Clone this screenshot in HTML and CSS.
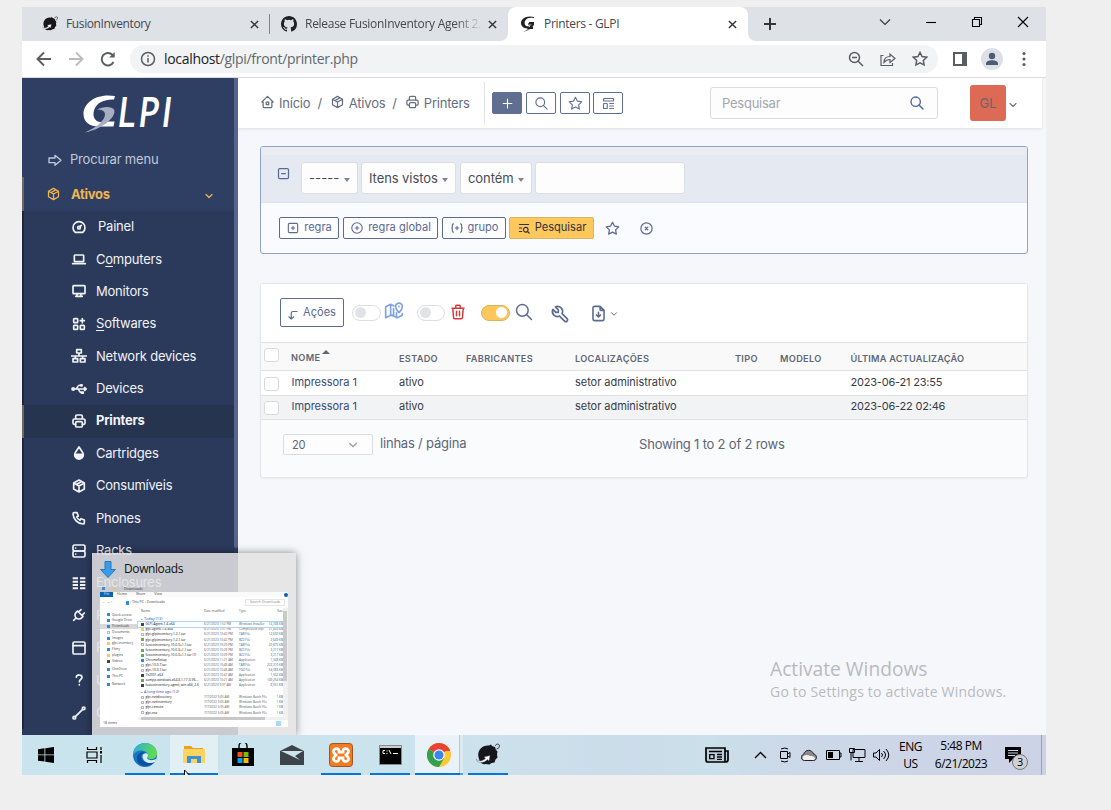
FILE: index.html
```html
<!DOCTYPE html>
<html lang="pt">
<head>
<meta charset="utf-8">
<title>Printers - GLPI</title>
<link rel="stylesheet" href="styles.css">
</head>
<body>
<svg class="sprite" aria-hidden="true">
  <symbol id="close" viewBox="0 0 10 10"><path d="M1 1l8 8M9 1l-8 8"/></symbol>
  <symbol id="home" viewBox="0 0 24 24"><path d="M5 12H3l9-9 9 9h-2M5 12v7a2 2 0 0 0 2 2h10a2 2 0 0 0 2-2v-7M10 12h4v4h-4z"/></symbol>
  <symbol id="package" viewBox="0 0 24 24"><path d="M12 3l8 4.500v9L12 21l-8-4.500v-9zM12 12l8-4.500M12 12v9M12 12L4 7.500M16 5.250l-8 4.500"/></symbol>
  <symbol id="printer" viewBox="0 0 24 24"><path d="M17 17h2a2 2 0 0 0 2-2v-4a2 2 0 0 0-2-2H5a2 2 0 0 0-2 2v4a2 2 0 0 0 2 2h2M17 9V5a2 2 0 0 0-2-2H9a2 2 0 0 0-2 2v4"/><rect x="7" y="13" width="10" height="8" rx="2"/></symbol>
  <symbol id="search" viewBox="0 0 24 24"><circle cx="10" cy="10" r="7"/><path d="M21 21l-6-6"/></symbol>
  <symbol id="plus" viewBox="0 0 24 24"><path d="M12 5v14M5 12h14"/></symbol>
  <symbol id="star" viewBox="0 0 24 24"><path d="M12 17.750l-6.172 3.245 1.179-6.873-5-4.867 6.900-1L12 2l3.086 6.253 6.900 1-5 4.867 1.179 6.873z"/></symbol>
  <symbol id="template" viewBox="0 0 24 24"><rect x="4" y="4" width="16" height="4" rx="1"/><rect x="4" y="12" width="6" height="8" rx="1"/><path d="M14 12h6M14 16h6M14 20h6"/></symbol>
  <symbol id="chevron" viewBox="0 0 24 24"><path d="M6 9l6 6 6-6"/></symbol>
  <symbol id="arrow-big" viewBox="0 0 24 24"><path d="M3 9h9V5l9 7.500-9 7.500v-4H3z"/></symbol>
  <symbol id="dashboard" viewBox="0 0 24 24"><circle cx="12" cy="13" r="2"/><path d="M13.450 11.550L15.500 9.500M6.400 20a9 9 0 1 1 11.200 0z"/></symbol>
  <symbol id="laptop" viewBox="0 0 24 24"><path d="M2.500 19h19"/><rect x="5" y="6" width="14" height="10" rx="1"/></symbol>
  <symbol id="screen" viewBox="0 0 24 24"><rect x="3" y="4" width="18" height="12" rx="1"/><path d="M7 20h10M9 16v4M15 16v4"/></symbol>
  <symbol id="apps" viewBox="0 0 24 24"><rect x="4" y="4" width="6" height="6" rx="1"/><rect x="4" y="14" width="6" height="6" rx="1"/><rect x="14" y="14" width="6" height="6" rx="1"/><path d="M14 7h6M17 4v6"/></symbol>
  <symbol id="network" viewBox="0 0 24 24"><path d="M8.500 2.500h7v5h-7zM3 16h7v5H3zM14 16h7v5h-7zM0 12h24M12 8v4M6.500 12v4M17.500 12v4"/></symbol>
  <symbol id="usb" viewBox="0 0 26 24"><circle cx="3.500" cy="12" r="2"/><path d="M3 12h19M7 12c4 0 3-6 7-6h2M10 12c4 0 3 6 7 6h1M16 5h2v2h-2zM17 17h3v2h-3zM22 9.500v5l3-2.500z"/></symbol>
  <symbol id="droplet" viewBox="0 0 24 24"><path d="M12 3l-5 7.500a6.500 6.500 0 1 0 10 0z"/><path d="M6 14h12a6 6 0 0 1-12 0z" fill="currentColor"/></symbol>
  <symbol id="phone" viewBox="0 0 24 24"><path d="M5 4h4l2 5-2.500 1.500a11 11 0 0 0 5 5L15 13l5 2v4a2 2 0 0 1-2 2A16 16 0 0 1 3 6a2 2 0 0 1 2-2"/></symbol>
  <symbol id="server" viewBox="0 0 24 24"><rect x="3" y="3" width="18" height="9" rx="2.500"/><rect x="3" y="12" width="18" height="9" rx="2.500"/><path d="M7 7.500v.01M7 16.500v.01"/></symbol>
  <symbol id="enclosure" viewBox="0 0 24 24"><path d="M2.500 5h8M2.500 10h8M2.500 15h8M2.500 20h8M13.500 5h8M13.500 10h8M13.500 15h8M13.500 20h8" stroke-width="3" stroke-linecap="butt"/></symbol>
  <symbol id="plug" viewBox="0 0 24 24"><path d="M9.785 6L18 14.215l-2.054 2.054a5.810 5.810 0 1 1-8.215-8.215zM4 20l3.500-3.500M15 4l-3.500 3.500M20 9l-3.500 3.500"/></symbol>
  <symbol id="panel" viewBox="0 0 24 24"><rect x="3" y="3" width="18" height="18" rx="2"/><path d="M3 8.500h18"/></symbol>
  <symbol id="question" viewBox="0 0 24 24"><path d="M8 8c0-5 8.500-4.500 8.500 0 0 3-4 3.500-4 6.500M12.500 19v.5"/></symbol>
  <symbol id="line" viewBox="0 0 24 24"><circle cx="5" cy="19" r="2"/><circle cx="19" cy="5" r="2"/><path d="M6.500 17.500l11-11"/></symbol>
  <symbol id="square-minus" viewBox="0 0 24 24"><rect x="4" y="4" width="16" height="16" rx="2"/><path d="M9 12h6"/></symbol>
  <symbol id="square-plus" viewBox="0 0 24 24"><rect x="4" y="4" width="16" height="16" rx="2"/><path d="M9 12h6M12 9v6"/></symbol>
  <symbol id="circle-plus" viewBox="0 0 24 24"><circle cx="12" cy="12" r="9"/><path d="M9 12h6M12 9v6"/></symbol>
  <symbol id="circle-x" viewBox="0 0 24 24"><circle cx="12" cy="12" r="9"/><path d="M10 10l4 4M14 10l-4 4"/></symbol>
  <symbol id="code-plus" viewBox="0 0 24 24"><path d="M9 12h6M12 9v6M6 19a2 2 0 0 1-2-2v-4l-1-1 1-1V7a2 2 0 0 1 2-2M18 19a2 2 0 0 0 2-2v-4l1-1-1-1V7a2 2 0 0 0-2-2"/></symbol>
  <symbol id="list-search" viewBox="0 0 24 24"><circle cx="15" cy="15" r="4"/><path d="M18.500 18.500L21 21M4 6h16M4 12h4M4 18h4"/></symbol>
  <symbol id="corner" viewBox="0 0 24 24"><path d="M19 6h-7a3 3 0 0 0-3 3v10l-4-4M9 19l4-4"/></symbol>
  <symbol id="map" viewBox="0 0 24 24"><path d="M10 17.500L8 17l-6 3V7l6-3 4 2M8 4v13M22 15v2l-6 3-6-3M15 14v6M18 14s-4-4-4-7.500a4 4 0 0 1 8 0C22 10 18 14 18 14zM18 6.500v.5M11.500 9v8"/></symbol>
  <symbol id="trash" viewBox="0 0 24 24"><path d="M4 7h16M10 11v6M14 11v6M5 7l1 12a2 2 0 0 0 2 2h8a2 2 0 0 0 2-2l1-12M9 7V4a1 1 0 0 1 1-1h4a1 1 0 0 1 1 1v3"/></symbol>
  <symbol id="tool" viewBox="0 0 24 24"><path d="M7 10h3V7L6.500 3.500a6 6 0 0 1 8 8l6 6a2 2 0 0 1-3 3l-6-6a6 6 0 0 1-8-8z"/></symbol>
  <symbol id="file-down" viewBox="0 0 24 24"><path d="M14 3v4a1 1 0 0 0 1 1h4M17 21H7a2 2 0 0 1-2-2V5a2 2 0 0 1 2-2h7l5 5v11a2 2 0 0 1-2 2zM12 10.500v6M9.500 14l2.500 2.500 2.500-2.500"/></symbol>
  <symbol id="hedgehog" viewBox="0 0 24 24"><path d="M3 16C0 8 6 1.500 13 2.500l2-1 1 1.500 3 1 1 3 1.500 1.500-.5 3 .5 3-2 2-1 3-3 .500-2 1.500-4-.5C7 22 4 20 3 16z" fill="#16161b"/><path d="M19.500 3c0-2.500 4-2.500 4 0s-3 3-3 3" fill="none" stroke="#333" stroke-width="1"/><path d="M0 16c2 3 6.500 2.500 9.500-.5L8 14l6-1.500-1 5.500-1.500-1.500C8 20.500 1 20.500 0 16z" fill="#fff" stroke="#555" stroke-width=".4"/></symbol>
</svg>

<main class="desktop">
  <div class="tabs">
    <div class="tabs-left">
      <div class="tab tab-one">
        <svg class="fav"><use href="#hedgehog"/></svg><span class="tab-title">FusionInventory</span><svg class="x"><use href="#close"/></svg>
      </div>
      <div class="tab tab-two">
        <svg class="fav" viewBox="0 0 16 16"><path fill="#1f2328" d="M8 0C3.580 0 0 3.580 0 8c0 3.540 2.290 6.530 5.470 7.590.4.070.55-.17.55-.38v-1.490c-2.010.37-2.530-.49-2.690-.94-.09-.23-.48-.94-.82-1.130-.28-.15-.68-.52-.01-.53.63-.01 1.080.58 1.230.82.72 1.210 1.870.87 2.330.66.070-.52.28-.87.51-1.070-1.780-.2-3.640-.89-3.640-3.950 0-.87.31-1.590.82-2.150-.08-.2-.36-1.020.08-2.120 0 0 .67-.21 2.200.82a7.600 7.600 0 0 1 4 0c1.530-1.040 2.200-.82 2.200-.82.44 1.100.16 1.920.08 2.120.51.56.82 1.270.82 2.150 0 3.070-1.870 3.750-3.650 3.950.29.25.54.73.54 1.480v2.200c0 .21.15.46.55.38A8 8 0 0 0 16 8c0-4.420-3.580-8-8-8z"/></svg>
        <span class="tab-title fade">Release FusionInventory Agent 2.</span><svg class="x"><use href="#close"/></svg>
      </div>
    </div>
    <div class="tab-active-wrap">
      <div class="tab tab-active">
        <svg class="fav" viewBox="0 0 16 16"><path d="M14 1C6-1 1 3 1 7s4 6 7 5l1-2C5 11 4 8 5 5c1-3 5-4 9-3z" fill="#222"/><path d="M8 7h5v3c-2 3-5 5-10 6 4-2 6-4 7-6l-2-1z" fill="#777"/><path d="M9 6h5v3l-3 3h-2l3-4H9zM8 11h5v2H7z" fill="#222"/></svg>
        <span class="tab-title">Printers - GLPI</span><svg class="x"><use href="#close"/></svg>
      </div>
    </div>
    <div class="tabs-right">
      <svg class="newtab" viewBox="0 0 12 12"><path d="M6 0v12M0 6h12"/></svg>
      <div class="win-controls">
        <svg viewBox="0 0 12 12"><path d="M1 3.500l5 5 5-5"/></svg>
        <svg viewBox="0 0 12 12"><path d="M1 6.500h10"/></svg>
        <svg viewBox="0 0 12 12"><path d="M1.500 3.500h7v7h-7zM3.500 3V1.500h7v7H9"/></svg>
        <svg viewBox="0 0 12 12"><path d="M1 1l10 10M11 1L1 11"/></svg>
      </div>
    </div>
  </div>

  <div class="toolbar">
    <svg class="nav" viewBox="0 0 16 16"><path d="M15 8H2M8 1.500L1.500 8 8 14.500"/></svg>
    <svg class="nav dim" viewBox="0 0 16 16"><path d="M1 8h13M8 1.500L14.500 8 8 14.500"/></svg>
    <svg class="nav" viewBox="0 0 16 16"><path d="M13.500 11A6.200 6.200 0 1 1 12.500 4l1.500 1.500"/><path d="M14.700 1v5.500H9.200z" fill="#5a5e63" stroke="none"/></svg>
    <div class="omnibox">
      <svg class="info" viewBox="0 0 16 16"><circle cx="8" cy="8" r="6.500"/><path d="M8 7v4.500M8 4.300v1.500"/></svg>
      <span class="url"><b>localhost</b>/glpi/front/printer.php</span>
      <svg class="oi" viewBox="0 0 16 16"><circle cx="6.500" cy="6.500" r="5"/><path d="M10.200 10.200L15 15M4 6.500h5"/></svg>
      <svg class="oi" viewBox="0 0 16 16"><path d="M3.500 4.500H1v10h11.500V12M4 11.500c0-4 2.500-6 6-6V3l5 4.500-5 4v-3c-3 0-4.500 1-6 3z" stroke-width="1.200"/></svg>
      <svg class="oi" viewBox="0 0 24 24"><use href="#star"/></svg>
    </div>
    <svg class="side" viewBox="0 0 14 14"><path d="M0 0h14v14H0z" fill="#5a5e63"/><path d="M2 2h7v10H2z" fill="#fff"/></svg>
    <svg class="person" viewBox="0 0 22 22"><circle cx="11" cy="11" r="11" fill="#dde0e6"/><circle cx="11" cy="8" r="3.200" fill="#4d5b75"/><path d="M5 17v-1.500c0-4.500 12-4.500 12 0V17z" fill="#4d5b75"/></svg>
    <svg class="dots" viewBox="0 0 4 16"><circle cx="2" cy="2.500" r="1.600"/><circle cx="2" cy="8" r="1.600"/><circle cx="2" cy="13.500" r="1.600"/></svg>
  </div>

  <div class="page">
    <aside class="sidebar">
      <svg class="logo" viewBox="0 0 92 40"><path d="M33 2C14-1 1.500 9 1.500 20c0 8 6 12.500 15.500 12.500h14.500l1-5H22l-4 .5c-6-1-8-7-5.500-13C15 8.500 23 5 32 5.500z" fill="#fff"/><path d="M15 15.500c6-3.500 15-3.500 17 0 3 6-9 19-29 23 11-5 20-12 20-18 0-4-4-5-8-5z" fill="#a6aec2"/><text transform="translate(34 32.500) skewX(-7) scale(.82 1)" class="logo-text">LPI</text></svg>
      <div class="find"><svg class="ico"><use href="#arrow-big"/></svg><span>Procurar menu</span></div>
      <div class="group"><svg class="ico"><use href="#package"/></svg><span>Ativos</span><svg class="ico caret"><use href="#chevron"/></svg></div>
      <nav class="menu">
        <a class="first"><svg class="ico"><use href="#dashboard"/></svg>Painel</a>
        <a><svg class="ico"><use href="#laptop"/></svg><span>C<u>o</u>mputers</span></a>
        <a><svg class="ico"><use href="#screen"/></svg>Monitors</a>
        <a><svg class="ico"><use href="#apps"/></svg><span><u>S</u>oftwares</span></a>
        <a><svg class="ico"><use href="#network"/></svg>Network devices</a>
        <a><svg class="ico"><use href="#usb"/></svg>Devices</a>
        <a class="current"><svg class="ico"><use href="#printer"/></svg>Printers</a>
        <a><svg class="ico"><use href="#droplet"/></svg>Cartridges</a>
        <a><svg class="ico"><use href="#package"/></svg>Consumíveis</a>
        <a><svg class="ico"><use href="#phone"/></svg>Phones</a>
        <a><svg class="ico"><use href="#server"/></svg>Racks</a>
        <a><svg class="ico"><use href="#enclosure"/></svg>Enclosures</a>
        <a><svg class="ico"><use href="#plug"/></svg>P</a>
        <a><svg class="ico"><use href="#panel"/></svg>P</a>
        <a><svg class="ico"><use href="#question"/></svg>U</a>
        <a><svg class="ico"><use href="#line"/></svg>C</a>
      </nav>
      <div class="side-scroll"></div>
    </aside>

    <section class="content">
      <header class="top">
        <div class="crumbs">
          <svg class="ico"><use href="#home"/></svg><span class="c1">Início</span><span class="sl">/</span>
          <svg class="ico"><use href="#package"/></svg><span class="c2">Ativos</span><span class="sl">/</span>
          <svg class="ico"><use href="#printer"/></svg><span class="c3">Printers</span>
        </div>
        <div class="quick">
          <a class="qb solid"><svg class="ico"><use href="#plus"/></svg></a>
          <a class="qb"><svg class="ico"><use href="#search"/></svg></a>
          <a class="qb"><svg class="ico"><use href="#star"/></svg></a>
          <a class="qb last"><svg class="ico"><use href="#template"/></svg></a>
        </div>
        <div class="global"><span>Pesquisar</span><svg class="ico"><use href="#search"/></svg></div>
        <div class="user">GL</div>
        <svg class="ico user-caret"><use href="#chevron"/></svg>
      </header>

      <div class="criteria card">
        <div class="rule">
          <svg class="ico"><use href="#square-minus"/></svg>
          <div class="sel s1"><span>-----</span><i></i></div>
          <div class="sel s2"><span>Itens vistos</span><i></i></div>
          <div class="sel s3"><span>contém</span><i></i></div>
          <div class="sel s4"></div>
        </div>
        <div class="actions">
          <a class="btn b1"><svg class="ico"><use href="#square-plus"/></svg>regra</a>
          <a class="btn b2"><svg class="ico"><use href="#circle-plus"/></svg>regra global</a>
          <a class="btn b3"><svg class="ico"><use href="#code-plus"/></svg>grupo</a>
          <a class="btn b4"><svg class="ico"><use href="#list-search"/></svg>Pesquisar</a>
          <svg class="ico a1"><use href="#star"/></svg>
          <svg class="ico a2"><use href="#circle-x"/></svg>
        </div>
      </div>

      <div class="results card">
        <div class="bar">
          <a class="acoes"><svg class="ico"><use href="#corner"/></svg>Ações</a>
          <span class="toggle"></span><svg class="ico map"><use href="#map"/></svg>
          <span class="toggle t2"></span><svg class="ico trash"><use href="#trash"/></svg>
          <span class="toggle on"></span><svg class="ico mag"><use href="#search"/></svg>
          <svg class="ico wrench"><use href="#tool"/></svg>
          <svg class="ico file"><use href="#file-down"/></svg>
          <svg class="ico tiny"><use href="#chevron"/></svg>
        </div>
        <div class="tr th"><i class="cb"></i><span class="sorted">Nome</span><span>Estado</span><span>Fabricantes</span><span>Localizações</span><span>Tipo</span><span>Modelo</span><span>Última actualização</span></div>
        <div class="tr"><i class="cb"></i><span class="link">Impressora 1</span><span>ativo</span><span></span><span>setor administrativo</span><span></span><span></span><span>2023-06-21 23:55</span></div>
        <div class="tr even"><i class="cb"></i><span class="link">Impressora 1</span><span>ativo</span><span></span><span>setor administrativo</span><span></span><span></span><span>2023-06-22 02:46</span></div>
        <div class="foot">
          <div class="count"><span>20</span><svg class="ico"><use href="#chevron"/></svg></div>
          <span class="per">linhas / página</span>
          <span class="showing">Showing 1 to 2 of 2 rows</span>
        </div>
      </div>
    </section>

    <div class="watermark"><p class="w1">Activate Windows</p><p class="w2">Go to Settings to activate Windows.</p></div>

    <div class="preview">
      <div class="preview-title"><svg viewBox="0 0 16 17"><path d="M5 .5h6v8h4.500L8 16.500.5 8.500H5z" fill="#3c9be6" stroke="#2879bd"/></svg><span>Downloads</span></div>
      <div class="mini-title"><i class="down"></i><i class="fold"></i><span>Downloads</span></div>
      <div class="mini">
        <div class="ribbon"><b>File</b><span>Home</span><span>Share</span><span>View</span><i></i></div>
        <div class="addr"><span class="arr">← → ↑</span><i></i><span class="path">› This PC › Downloads</span><span class="srch">Search Downloads</span></div>
        <div class="mini-body">
          <div class="tree">
            <span><i class="bl"></i>Quick access</span><span><i class="bl"></i>Google Drive</span><span class="on"><i class="bl"></i>Downloads</span><span><i></i>Documents</span><span><i class="bl"></i>Images</span><span><i class="ye"></i>glpi-inventory</span><span><i class="bl"></i>Filmy</span><span><i class="ye"></i>plugins</span><span><i class="bk"></i>Videos</span><span class="gap"><i class="bl"></i>OneDrive</span><span class="gap"><i class="bl"></i>This PC</span><span class="gap"><i class="bl"></i>Network</span>
          </div>
          <div class="files">
            <div class="f h"><span>Name</span><span>Date modified</span><span>Type</span><span>Size</span></div>
            <div class="g">⌄ Today (13)</div>
            <div class="f sel-row"><span><i class="bk"></i>GLPI-Agent-1.4-x64</span><span>6/21/2023 1:52 PM</span><span>Windows Installer</span><span>14,748 KB</span></div>
            <div class="f"><span><i class="ye"></i>glpi-agent-1.4-x64</span><span>6/21/2023 1:51 PM</span><span>Compressed (zip)</span><span>21,833 KB</span></div>
            <div class="f"><span><i></i>glpi-glpiinventory-1.2.1.tar</span><span>6/21/2023 10:42 PM</span><span>TAR File</span><span>12,630 KB</span></div>
            <div class="f"><span><i class="gr"></i>glpi-glpiinventory-1.2.1.tar</span><span>6/21/2023 10:42 PM</span><span>BZ2 File</span><span>2,649 KB</span></div>
            <div class="f"><span><i></i>fusioninventory-10.0.3+1.1.tar</span><span>6/21/2023 10:29 PM</span><span>TAR File</span><span>20,870 KB</span></div>
            <div class="f"><span><i class="gr"></i>fusioninventory-10.0.3+1.1.tar</span><span>6/21/2023 10:29 PM</span><span>BZ2 File</span><span>3,217 KB</span></div>
            <div class="f"><span><i class="gr"></i>fusioninventory-10.0.3+1.1.tar (1)</span><span>6/21/2023 10:29 PM</span><span>BZ2 File</span><span>3,217 KB</span></div>
            <div class="f"><span><i class="bl"></i>ChromeSetup</span><span>6/21/2023 11:21 AM</span><span>Application</span><span>1,348 KB</span></div>
            <div class="f"><span><i></i>glpi-10.0.7.tar</span><span>6/21/2023 10:48 AM</span><span>TAR File</span><span>222,210 KB</span></div>
            <div class="f"><span><i></i>glpi-10.0.7.tar</span><span>6/21/2023 10:48 AM</span><span>TGZ File</span><span>54,083 KB</span></div>
            <div class="f"><span><i class="bk"></i>7z2301-x64</span><span>6/21/2023 10:47 AM</span><span>Application</span><span>1,552 KB</span></div>
            <div class="f"><span><i class="gr"></i>xampp-windows-x64-8.1.17-0-VS...</span><span>6/21/2023 10:21 AM</span><span>Application</span><span>149,254 KB</span></div>
            <div class="f"><span><i class="bk"></i>fusioninventory-agent_win-x64_2.6</span><span>6/21/2023 9:37 AM</span><span>Application</span><span>8,551 KB</span></div>
            <div class="g">⌄ A long time ago (12)</div>
            <div class="f"><span><i></i>glpi-netdiscovery</span><span>7/7/2022 5:05 AM</span><span>Windows Batch File</span><span>1 KB</span></div>
            <div class="f"><span><i></i>glpi-netinventory</span><span>7/7/2022 5:05 AM</span><span>Windows Batch File</span><span>1 KB</span></div>
            <div class="f"><span><i></i>glpi-remote</span><span>7/7/2022 5:05 AM</span><span>Windows Batch File</span><span>1 KB</span></div>
            <div class="f"><span><i></i>glpi-esx</span><span>7/7/2022 5:05 AM</span><span>Windows Batch File</span><span>1 KB</span></div>
            <div class="hbar"><i></i></div>
          </div>
          <div class="vbar"><i></i></div>
        </div>
        <div class="mini-status"><span>18 items</span><i></i></div>
      </div>
    </div>
  </div>

  <footer class="taskbar">
    <div class="tk"><svg width="16" height="16" viewBox="0 0 16 16"><path d="M0 2.200l6.500-.9v6.200H0zM7.300 1.200L16 0v7.500H7.300zM0 8.300h6.500v6.300L0 13.700zM7.300 8.300H16V16l-8.700-1.300z"/></svg></div>
    <div class="tk gap3"><svg width="17" height="16" viewBox="0 0 17 16"><path d="M1.500 0v2.500h9V0M1.500 16v-2.500h9V16M1 5h10v6H1zM15 0v3M15 8v8" fill="none" stroke="#000" stroke-width="1.200"/><path d="M14 4h2v2.500h-2z"/></svg></div>
    <div class="tk run"><svg width="24" height="24" viewBox="0 0 24 24"><defs><linearGradient id="eg" x1="0" y1="0" x2="1" y2=".3"><stop offset="0" stop-color="#2aa9e0"/><stop offset="1" stop-color="#5fdc4c"/></linearGradient></defs><circle cx="12" cy="12" r="12" fill="#1674c6"/><path d="M0 12C0 5 5 0 12 0s12 5 12 10c0 5-4 6.500-7 6-3-.5-2.500-2-2-3C16 8 5 4 0 12z" fill="url(#eg)"/><path d="M8 12c-1 6 6 10 14 6.500C16 26 3 24 4 14c1-4 5-6 9-4-3 0-4 1-5 2z" fill="#0c4fa0"/><path d="M9.500 13c0-3 5-4 5.500-1 .2 2-2 3 .5 4.500 3 1.500 6 .5 8-1l-1.500 3.500c-7 3-12.500-1-12.500-6z" fill="#d8edf5"/></svg></div>
    <div class="tk run on"><svg width="22" height="20" viewBox="0 0 22 20"><path d="M1 1h7l2 2h10v15H1z" fill="#e3a51c"/><path d="M0 4h22v14H0z" fill="#fcd462"/><path d="M4 18v-7h14v7h-4v-4H8v4z" fill="#3b93d6"/></svg></div>
    <div class="tk"><svg width="24" height="24" viewBox="0 0 24 24"><path d="M8 6V3a4 4 0 0 1 8 0v3" fill="none" stroke="#111" stroke-width="1.500"/><path d="M1 5h22v18H1z"/><path d="M6.500 9h5v5h-5z" fill="#f25022"/><path d="M12.500 9h5v5h-5z" fill="#7fba00"/><path d="M6.500 15h5v5h-5z" fill="#00a4ef"/><path d="M12.500 15h5v5h-5z" fill="#ffb900"/></svg></div>
    <div class="tk"><svg width="24" height="20" viewBox="0 0 24 20"><path d="M12 0l12 6v14H0V6z" fill="#3c4449"/><path d="M1 6h22l-8 5 5 4L1 6z" fill="#cde3ec"/></svg></div>
    <div class="tk run"><svg width="24" height="24" viewBox="0 0 24 24"><rect x=".5" y=".5" width="23" height="23" rx="3" fill="#f47a1f" stroke="#9c5526"/><path d="M6 6c2-1 4 0 4 2v1h4V8c0-2 2-3 4-2s2 3 0 5l-1 1 1 1c2 2 2 4 0 5s-4 0-4-2v-1h-4v1c0 2-2 3-4 2s-2-3 0-5l1-1-1-1C4 9 4 7 6 6z" fill="none" stroke="#fff" stroke-width="2.800"/></svg></div>
    <div class="tk run"><svg width="23" height="20" viewBox="0 0 23 20"><path d="M.5.5h22v19H.5z" stroke="#888"/><path d="M1 1h21v2H1z" fill="#ccc"/><path d="M6 5.500H4v3h2M8 5.500v1M8 8v1M10 5l2 4M14 8.500h5" stroke="#fff" fill="none"/></svg></div>
    <div class="tk run on chrome"><svg width="24" height="24" viewBox="0 0 24 24"><circle cx="12" cy="12" r="12" fill="#fcc934"/><path d="M12 12L1.600 6A12 12 0 0 1 22.400 6z" fill="#ea4335"/><path d="M1.600 6a12 12 0 0 0 10.400 18l5.200-9z" fill="#34a04c"/><path d="M12 6h10.400l.8 2H12z" fill="#ea4335"/><circle cx="12" cy="12" r="5.800" fill="#fff"/><circle cx="12" cy="12" r="4.600" fill="#3f83ec"/></svg></div>
    <div class="tk run"><svg width="24" height="24" viewBox="0 0 24 24"><use href="#hedgehog"/></svg></div>
    <div class="tray">
      <svg class="news" width="24" height="16" viewBox="0 0 24 16"><path d="M1 1h19v14H3q-2 0-2-2zM20 4h3v9q0 2-3 2" fill="#bcd0dc" stroke="#000" stroke-width="1.700"/><path d="M4 4.500h13M12 7.500h5M12 10h5M12 12.300h5M4.700 7.700H9v4H4.700z" fill="none" stroke="#000" stroke-width="1.300"/></svg>
      <svg class="up" width="13" height="8" viewBox="0 0 13 8"><path d="M1 7l5.500-5.500L12 7" fill="none" stroke="#000" stroke-width="1.300"/></svg>
      <svg class="meet" width="12" height="16" viewBox="0 0 12 16"><path d="M1.500 4.500h7v7h-7zM8.500 7l2.500-1.500v5L8.500 9M2 2q4-2 7 0M2 14q4 2 7 0" fill="none" stroke="#000"/></svg>
      <svg class="cloud" width="16" height="12" viewBox="0 0 16 12"><path d="M3.500 11.500C-.5 11.500-.5 6 2.500 5.500 4 0 11 0 12.500 5c4 .5 4 6.500 0 6.500z" fill="#8a8a8a" stroke="#222"/><path d="M3.500 11C1 11 1 7 3.500 6.500c2-1 4-.5 5.500.5 2 0 4 0 5 2.500-.5 1.500-1 1.500-2 1.500z" fill="#f0f0f0"/></svg>
      <svg class="batt" width="16" height="10" viewBox="0 0 16 10"><path d="M.5.5h13v9H.5zM13.500 3H15v4h-1.500" fill="none" stroke="#000"/><path d="M2 2h5v6H2z"/></svg>
      <svg class="lan" width="17" height="14" viewBox="0 0 17 14"><path d="M4 1.500h12v8H4zM10 9.500V13M6 13.500h8M.5.500h5v4h-5zM2 4v8.500" fill="none" stroke="#000"/></svg>
      <svg class="vol" width="17" height="14" viewBox="0 0 17 14"><path d="M.5 5h2.500L6.500 1.500v11L3 9H.5zM8.500 5q2 2 0 4M10.500 3q4 4 0 8M13 1q5.500 6 0 12" fill="none" stroke="#000"/></svg>
      <div class="lang"><span>ENG</span><span>US</span></div>
      <div class="clock"><span>5:48 PM</span><span>6/21/2023</span></div>
      <div class="note"><svg width="16" height="16" viewBox="0 0 16 16"><path d="M0 0h16v12H8l-4 4v-4H0z"/><path d="M3 3.500h10M3 6h10M3 8.500h7" stroke="#ccd5e5"/></svg><b>3</b></div>
      <div class="peek"></div>
    </div>
  </footer>
  <svg class="cursor" viewBox="0 0 6 5"><path d="M.5 0v5M.5 0l5 5" fill="none" stroke="#000"/><path d="M1 1.500V5h3z" fill="#fff"/></svg>
</main>
</body>
</html>
```
FILE: styles.css
```css
* { box-sizing: border-box; }
body { margin: 0; background: #efefef; overflow: hidden; font-family: Inter, "Liberation Sans", sans-serif; }
.sprite { position: absolute; width: 0; height: 0; }
svg { flex: none; display: block; }
.ico { width: 16px; height: 16px; fill: none; stroke: currentColor; stroke-width: 2; stroke-linecap: round; stroke-linejoin: round; }

.desktop { position: relative; width: 1024px; height: 768px; margin: 7px 0 0 22px; display: flex; flex-direction: column; background: #fff; overflow: hidden; }

/* Browser tabs */
.tabs { height: 34px; display: flex; font-family: "Open Sans", sans-serif; font-size: 12px; color: #45484d; }
.tabs-left { width: 486px; display: flex; background: #dee1e6; border-bottom-right-radius: 8px; }
.tab { display: flex; align-items: center; height: 34px; }
.tab-one { width: 248px; padding: 0 11px 0 20px; position: relative; }
.tab-one::after { content: ""; width: 1px; height: 20px; background: #84878c; margin-left: 10px; margin-right: -11px; }
.tab-two { width: 238px; padding: 0 11px 0 11px; }
.fav { width: 16px; height: 16px; margin-right: 8px; }
.tab-title { flex: 1; white-space: nowrap; letter-spacing: -.38px; overflow: hidden; padding-bottom: 1px; }
.tab-two .tab-title { flex: none; width: 178px; letter-spacing: -.28px; }
.fade { -webkit-mask-image: linear-gradient(90deg, #000 84%, transparent 100%); mask-image: linear-gradient(90deg, #000 84%, transparent 100%); }
.x { width: 9px; height: 9px; stroke: #33363a; stroke-width: 1.6; margin-left: auto; }
.tab-active-wrap { width: 240px; background: linear-gradient(#dee1e6 50%, #fff 50%); }
.tab-active { background: #fff; border-radius: 8px 8px 0 0; padding: 0 11px 0 12px; }
.tab-active .tab-title { letter-spacing: -.3px; }
.tabs-right { flex: 1; display: flex; align-items: center; background: #dee1e6; border-bottom-left-radius: 8px; padding-left: 16px; }
.newtab { width: 12px; height: 12px; stroke: #33363a; stroke-width: 2; }
.win-controls { display: flex; gap: 34px; margin-left: 103px; margin-top: -5px; }
.win-controls svg { width: 12px; height: 12px; fill: none; stroke: #000; stroke-width: 1.1; }
.win-controls svg:first-child { stroke: #333; }

/* Address bar */
.toolbar { height: 37px; display: flex; align-items: center; border-bottom: 1px solid #d8dadd; padding-left: 14px; }
.nav { width: 16px; height: 16px; margin-right: 16px; fill: none; stroke: #5a5e63; stroke-width: 1.9; }
.nav.dim { stroke: #babcbe; }
.omnibox { width: 808px; height: 28px; border-radius: 14px; background: #f1f3f4; margin-left: -2px; display: flex; align-items: center; padding: 0 10px; gap: 16px; }
.info { width: 16px; height: 16px; fill: none; stroke: #5a5e63; stroke-width: 1.5; margin-right: -8px; }
.url { flex: 1; font-family: "Open Sans", sans-serif; font-size: 14px; letter-spacing: -.32px; color: #63676c; padding-bottom: 1px; }
.url b { font-weight: 400; color: #202124; }
.oi { width: 16px; height: 16px; fill: none; stroke: #5a5e63; stroke-width: 1.5; }
.oi:last-child { stroke-width: 2.2; }
.side { width: 14px; height: 14px; margin-left: 15px; }
.person { width: 22px; height: 22px; margin-left: 14px; }
.dots { width: 4px; height: 16px; margin-left: 19px; fill: #5a5e63; }

.page { position: relative; height: 657px; display: flex; background: #f6f7fb; overflow: hidden; }

/* Sidebar */
.sidebar { width: 216px; background: #2f3f64; color: #f1f3f7; font-size: 13px; position: relative; flex: none; }
.logo { width: 92px; height: 40px; margin: 16px 0 0 60px; overflow: visible; }
.logo-text { font: 600 42px "Open Sans", sans-serif; fill: #fff; letter-spacing: 2.5px; }
.find { display: flex; align-items: center; height: 32px; margin-top: 9px; margin-bottom: 2px; padding-left: 25px; color: #c2c8d5; letter-spacing: -.2px; }
.find svg { margin-right: 7px; margin-top: 2px; }
.group { display: flex; align-items: center; height: 34px; padding-left: 22px; border-left: 2px solid #6e6a61; color: #f0b650; font-weight: 700; letter-spacing: -.3px; }
.group span { padding-left: 10px; width: 142px; }
.group .ico { width: 15px; }
.group .caret { width: 12px; height: 12px; margin-top: 4px; stroke-width: 2.4; }
.menu { display: block; background: #2b3a5b; height: 524px; width: 212px; }
.menu a { display: flex; align-items: center; height: 32.4px; padding-left: 47px; gap: 9px; border-left: 2px solid #1d2739; padding-bottom: 2px; white-space: nowrap; letter-spacing: -.22px; }
.menu .ico { stroke-width: 2.5; margin-top: 1px; }
.menu .first { gap: 11px; }
.menu .current { background: #27344f; border-left-color: #6e6a61; font-weight: 700; padding-bottom: 3px; }
.menu .current .ico { margin-top: 2px; }
.side-scroll { position: absolute; right: 0; top: 0; width: 4px; height: 470px; background: #58648a; border-radius: 0 0 2px 2px; }
u { text-underline-offset: 2px; }

/* Page header */
.content { width: 804px; flex: none; }
.top { height: 50px; background: #fff; display: flex; align-items: center; box-shadow: 0 1px 3px rgba(40, 50, 80, .12); color: #656e7d; }
.crumbs { display: flex; align-items: center; width: 247px; height: 43px; padding-left: 22px; font-size: 13px; border-right: 1px solid #e4e5e8; letter-spacing: -.22px; }
.crumbs svg { width: 15px; height: 16px; margin-top: -3px; }
.crumbs span { margin-left: 4px; }
.crumbs .sl { margin: 0 8px 0 7px; }
.quick { display: flex; gap: 4px; padding-left: 7px; width: 225px; }
.qb { width: 30px; height: 22px; border: 1px solid #606f96; border-radius: 2px; color: #606f96; display: grid; place-items: center; }
.qb .ico { width: 15px; height: 15px; stroke-width: 1.8; }
.qb.last { margin-left: -1px; }
.solid { background: #606f91; color: #fff; }
.global { width: 228px; height: 32px; border: 1px solid #dadcde; border-radius: 3px; background: #fdfdfd; display: flex; align-items: center; justify-content: space-between; padding: 0 12px 0 11px; font-size: 13px; color: #a2a7b0; letter-spacing: -.25px; }
.global .ico { color: #4964a0; }
.user { width: 36px; height: 36px; margin-left: 32px; border-radius: 3px; background: #dc6a55; color: #6b6368; font-size: 13px; display: grid; place-items: center; }
.user-caret { width: 12px; height: 12px; margin: 4px 0 0 1px; stroke-width: 2.2; }

/* Search criteria */
.card { width: 768px; margin-left: 22px; border-radius: 3px; }
.criteria { height: 108px; margin-top: 18px; border: 1px solid #8fa3cd; background: #fafbfe; color: #5c6b90; }
.rule { height: 56px; background: linear-gradient(#ebecf1 8px, #e5e9f2 8px); border-bottom: 1px solid #dee1e7; display: flex; padding: 15px 0 0 15px; border-radius: 2px 2px 0 0; }
.rule .ico { width: 15px; height: 15px; margin: 4px 10px 0 0; }
.sel { height: 32px; border: 1px solid #dbdde1; border-radius: 3px; background: #fdfdfd; color: #474c56; font-size: 13px; letter-spacing: -.08px; display: flex; align-items: center; justify-content: space-between; padding: 0 7px; margin-right: 3px; white-space: nowrap; }
.sel i { border: 3px solid transparent; border-top: 4px solid #82868c; border-bottom: 0; margin-top: 3px; }
.s1 { width: 57px; letter-spacing: .1px; }
.s2 { width: 95px; margin-right: 4px; }
.s3 { width: 72px; }
.s4 { width: 150px; }
.actions { display: flex; align-items: center; height: 50px; padding-left: 18px; }
.btn { height: 22px; border: 1px solid #5c6b94; border-radius: 2px; display: flex; align-items: center; justify-content: center; gap: 4px; padding-bottom: 2px; font-size: 11.1px; background: #fdfdff; white-space: nowrap; }
.btn .ico { width: 14px; height: 14px; stroke-width: 1.9; margin-top: 2px; }
.b1 { width: 60px; margin-right: 4px; }
.b2 { width: 95px; margin-right: 4px; }
.b3 { width: 64px; margin-right: 3px; }
.b4 { width: 85px; background: #fec85d; border-color: #d9b263; color: #2f3440; }
.a1 { width: 15px; height: 15px; margin-left: 11px; }
.a2 { width: 15px; height: 15px; margin-left: 18.5px; }

/* Results */
.results { height: 195px; margin-top: 29px; border: 1px solid #e4e6ea; background: #fafbfd; box-shadow: 0 1px 3px rgba(40, 50, 80, .05); }
.bar { height: 58px; background: #fff; display: flex; align-items: center; padding: 0 0 1px 19px; color: #5c6b90; }
.acoes { width: 64px; height: 29px; border: 1px solid #5c6b94; border-radius: 2px; display: flex; align-items: center; gap: 3px; padding: 0 0 1px 5px; font-size: 11.1px; margin-right: 8px; }
.acoes .ico { width: 14px; height: 14px; margin-top: 5px; }
.toggle { width: 29px; height: 16px; border: 1px solid #dcdee2; border-radius: 8px; padding: 2px; background: #fff; display: flex; }
.toggle::before { content: ""; width: 11px; height: 11px; margin-top: -.5px; border-radius: 50%; background: #e2e3e6; }
.toggle.t2 { width: 28px; }
.toggle.on { background: #fdc75b; border-color: #dcb365; justify-content: flex-end; }
.toggle.on::before { background: #fff; }
.map { width: 20px; height: 20px; color: #7fa3e0; margin: -3px 13px 0 3px; }
.trash { width: 18px; height: 18px; color: #d63b3b; margin: -2px 14px 0 4px; }
.mag { width: 20px; height: 20px; margin: -2px 16px 0 4px; stroke-width: 1.8; }
.wrench { width: 20px; height: 20px; margin: 2px 20px 0 0; }
.file { width: 19px; height: 19px; margin: 2px 0 0 -1px; }
.tiny { width: 10px; height: 10px; margin-left: 1px; margin-top: 2px; stroke-width: 2.4; }
.tr { display: grid; grid-template-columns: 30px 108px 67px 109px 160px 45px 70px 1fr; height: 24px; align-items: center; background: #fff; font-size: 11px; letter-spacing: -.04px; color: #373b46; border-top: 1px solid #dfe1e4; white-space: nowrap; }
.tr span { padding-bottom: 2px; }
.tr .link { padding-left: .5px; }
.tr span:last-child { padding-left: .5px; letter-spacing: -.2px; }
.th { height: 28px; background: #f9f9f9; font-size: 9.2px; font-weight: 600; letter-spacing: .3px; color: #5f6775; text-transform: uppercase; }
.th span { padding: 4px 0 0; }
.tr.th span:last-child { letter-spacing: .22px; }
.th + .tr { height: 25px; }
.sorted::after { content: ""; display: inline-block; border: 4px solid transparent; border-bottom-color: #5f6775; border-top: 0; margin-left: 2px; vertical-align: 7px; }
.th .sorted { padding: 0; margin-top: -1px; }
.link { color: #3b4a72; }
.even { background: #f1f3f5; }
.even span { padding-bottom: 3px; }
.cb { width: 15px; height: 14px; margin-left: 3px; border: 1px solid #d8dade; border-radius: 3px; background: #fff; margin-top: 2px; }
.th .cb { margin-top: -3px; }
.even .cb { margin-top: 1px; }
.foot { border-top: 1px solid #dfe1e4; display: flex; align-items: center; height: 50px; padding-left: 22px; color: #5e6675; font-size: 13px; letter-spacing: -.2px; }
.count { width: 90px; height: 21px; border: 1px solid #dadce0; background: #fdfdfd; border-radius: 2px; display: flex; align-items: center; justify-content: space-between; padding: 0 12px 0 8px; font-size: 11.2px; }
.count .ico { width: 14px; height: 14px; color: #989da6; }
.per { margin-left: 7px; width: 259px; padding-bottom: 3px; }
.showing { padding-bottom: 1px; }

.watermark { position: absolute; left: 748px; top: 577px; font-family: "Open Sans", sans-serif; color: #b9babd; white-space: nowrap; }
.watermark p { margin: 0; }
.w1 { font-size: 19.2px; line-height: 27px; letter-spacing: 0; }
.w2 { font-size: 14px; line-height: 19px; letter-spacing: .2px; }

/* Taskbar window preview */
.preview { position: absolute; left: 70px; top: 475px; width: 204px; height: 182px; background: rgba(227, 227, 227, .86); box-shadow: 0 0 8px rgba(0, 0, 0, .45); padding: 7px 8px 0; font-family: "Open Sans", sans-serif; }
.preview-title { display: flex; align-items: center; height: 18px; font-size: 12px; letter-spacing: -.4px; color: #111; }
.preview-title span { padding-bottom: 2px; }
.preview-title svg { width: 16px; height: 17px; margin-right: 8px; }
.mini-title { height: 7px; margin-top: 7px; display: flex; align-items: center; gap: 8px; padding-left: 2px; font-size: 3.6px; line-height: 4px; color: #333; }
.mini-title i { width: 3px; height: 3px; background: #3d8ed8; }
.mini-title .fold { background: #f0c75a; }
.mini { width: 188px; height: 135px; background: #fff; font-size: 3.5px; line-height: 4.8px; color: #444; }
.ribbon { height: 5px; display: flex; gap: 9px; background: #fafafa; align-items: center; }
.ribbon b { width: 13px; background: #0a64b4; color: #dbe8f4; text-align: center; font-weight: 400; margin-right: -5px; }
.ribbon i { width: 4px; height: 4px; border-radius: 50%; background: #0a64b4; margin-left: auto; }
.addr { height: 11px; display: flex; align-items: center; padding: 0 2px; }
.addr .arr { width: 24px; color: #777; }
.addr i { width: 3px; height: 4px; background: #2e8be0; }
.addr .path { width: 116px; padding-left: 1px; }
.addr .srch { border: .5px solid #e6e6e6; padding: 0 4px; color: #888; }
.mini-body { display: flex; height: 112px; }
.tree { width: 38px; padding-top: 4px; display: flex; flex-direction: column; font-size: 3.3px; }
.tree span { height: 5.8px; padding-left: 7px; display: flex; align-items: center; gap: 2px; white-space: nowrap; }
.tree .on { background: #d9d9d9; }
.tree .gap { margin-top: 2px; }
.mini-body i { width: 3px; height: 3px; flex: none; border: .4px solid #bbb; }
.mini-body .bl { background: #2e8be0; border: 0; }
.mini-body .ye { background: #f6cb56; border: 0; }
.mini-body .bk { background: #444; border: 0; }
.mini-body .gr { background: #6bab4f; border: 0; }
.files { width: 145px; }
.f { display: grid; grid-template-columns: 63px 35px 27px 17px; height: 5.07px; padding-left: 3px; white-space: nowrap; font-size: 3.1px; }
.f span { display: flex; align-items: center; gap: 1.5px; color: #555; }
.f span:first-child { color: #111; font-size: 3.3px; }
.f span:last-child { justify-content: flex-end; }
.f.h { height: 7px; }
.f.h span:first-child { color: #555; }
.sel-row { outline: .4px solid #a9d6ef; }
.g { height: 7.2px; line-height: 7.2px; padding-left: 2px; color: #2a3f9b; font-size: 3.8px; }
.hbar { height: 3px; background: #f0f0f0; margin-top: 2px; }
.mini-body .hbar i { display: block; width: 124px; height: 3px; background: #c8c8c8; border: 0; margin-left: 3px; }
.vbar { width: 5px; background: #f0f0f0; padding-top: 3px; }
.mini-body .vbar i { display: block; width: 4px; height: 70px; background: #cacaca; border: 0; }
.mini-status { height: 6px; display: flex; align-items: center; justify-content: space-between; padding: 0 7px 0 3px; }
.mini-status i { width: 5px; height: 5px; background: #a8daf2; }

/* Taskbar */
.taskbar { height: 40px; display: flex; background: linear-gradient(90deg, #cae4ed 0%, #cbe3ec 40%, #ccdcea 60%, #cae0ea 67%, #ccd9e8 74%, #ccd2e6 100%); }
.tk { width: 48px; height: 40px; margin-right: 1px; display: grid; place-items: center; position: relative; }
.tk:first-child { margin-right: 0; }
.tk.gap3 { margin-right: 3px; }
.run { background: linear-gradient(#0078d7, #0078d7) center bottom / 40px 2px no-repeat; }
.run.on { background: linear-gradient(#0078d7, #0078d7) center bottom / 48px 2px no-repeat, #e2eff5; }
.run.chrome { background: linear-gradient(90deg, #0078d7 45px, #55a5dd 45px) center bottom / 48px 2px no-repeat, linear-gradient(90deg, #e9f2f8 44px, #b4c8d3 44px, #b4c8d3 45px, #dceaf2 45px); }
.tray { margin-left: auto; display: flex; align-items: center; font-family: "Open Sans", sans-serif; font-size: 12px; letter-spacing: -.5px; }
.up { margin-left: 25px; }
.meet { margin-left: 12px; }
.cloud { margin-left: 10px; }
.batt { margin-left: 9px; }
.lan { margin-left: 7px; }
.vol { margin-left: 7px; }
.lang, .clock { display: flex; flex-direction: column; align-items: center; line-height: 17px; }
.lang { width: 41px; }
.clock { width: 60px; margin-top: -1px; line-height: 18px; }
.note { width: 50px; height: 40px; padding: 12px 0 0 14px; position: relative; }
.note b { position: absolute; left: 21px; top: 19px; width: 16px; height: 16px; border: 1px solid #777; border-radius: 50%; background: #cfd1d6; font-size: 11px; line-height: 14px; text-align: center; font-weight: 400; }
.peek { width: 5px; height: 40px; border-left: 1px solid #9aa4b8; }
.cursor { position: absolute; left: 162px; top: 763px; width: 6px; height: 5px; }
```
